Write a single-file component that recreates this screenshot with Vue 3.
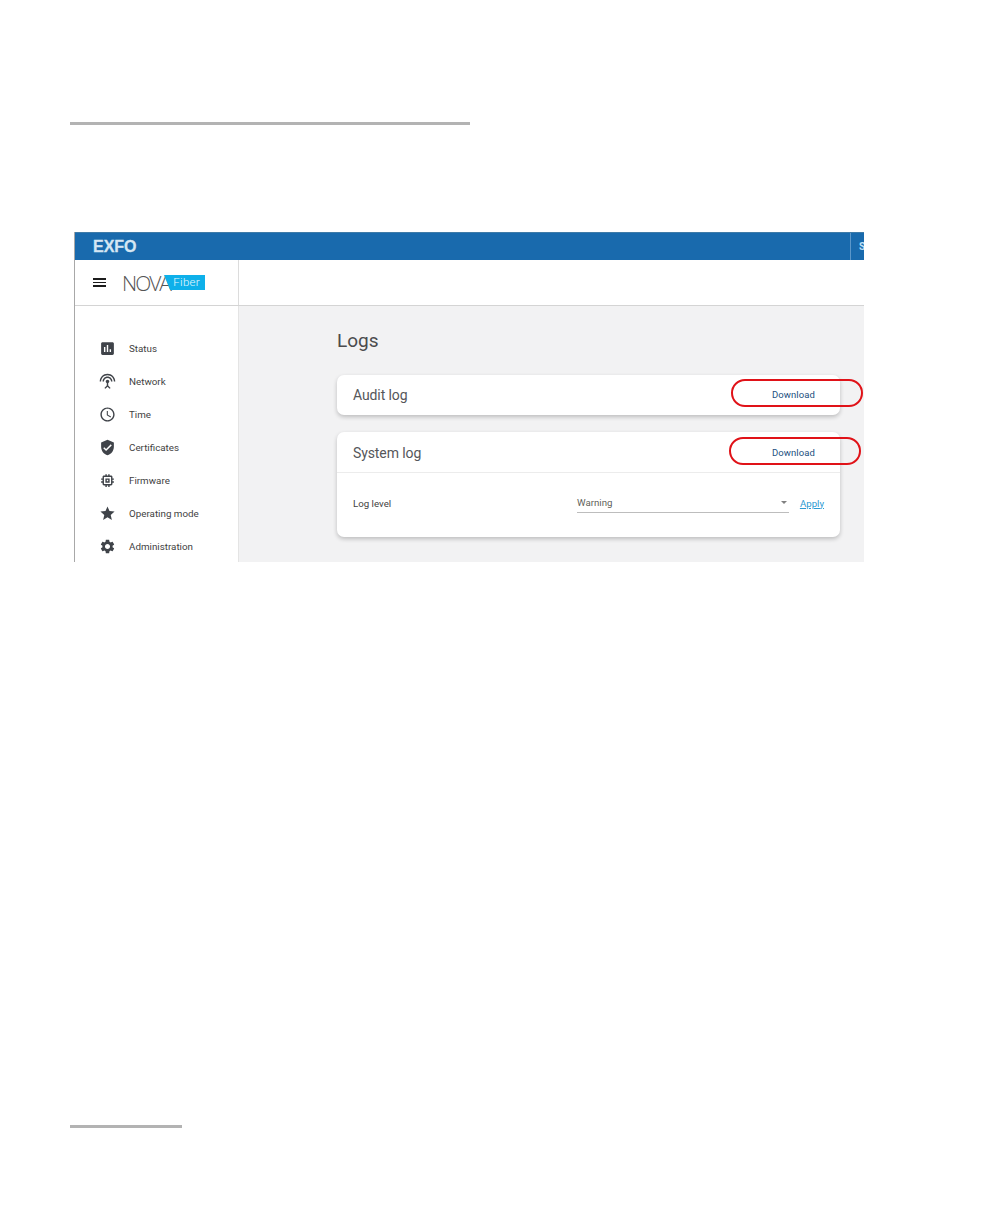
<script setup>
const nav = [
  { label: 'Status', d: 'M19 3H5c-1.1 0-2 .9-2 2v14c0 1.1.9 2 2 2h14c1.1 0 2-.9 2-2V5c0-1.1-.9-2-2-2zM9 17H7v-7h2v7zm4 0h-2V7h2v10zm4 0h-2v-4h2v4z' },
  { label: 'Network', d: 'M12 5c-3.87 0-7 3.13-7 7h2c0-2.76 2.24-5 5-5s5 2.24 5 5h2c0-3.87-3.13-7-7-7zm1 9.29c.88-.39 1.5-1.26 1.5-2.29 0-1.38-1.12-2.5-2.5-2.5S9.5 10.62 9.5 12c0 1.02.62 1.9 1.5 2.29v3.3L7.59 21 9 22.41l3-3 3 3L16.41 21 13 17.59v-3.3zM12 1C5.93 1 1 5.93 1 12h2c0-4.97 4.03-9 9-9s9 4.03 9 9h2c0-6.07-4.93-11-11-11z' },
  { label: 'Time', d: 'M11.99 2C6.47 2 2 6.48 2 12s4.47 10 9.99 10C17.52 22 22 17.52 22 12S17.52 2 11.99 2zM12 20c-4.42 0-8-3.58-8-8s3.58-8 8-8 8 3.58 8 8-3.58 8-8 8zm.5-13H11v6l5.25 3.15.75-1.23-4.5-2.67z' },
  { label: 'Certificates', d: 'M12 1L3 5v6c0 5.55 3.84 10.74 9 12 5.16-1.26 9-6.45 9-12V5l-9-4zm-2 16l-4-4 1.41-1.41L10 14.17l6.59-6.59L18 9l-8 8z' },
  { label: 'Firmware', d: 'M15 9H9v6h6V9zm-2 4h-2v-2h2v2zm8-2V9h-2V7c0-1.1-.9-2-2-2h-2V3h-2v2h-2V3H9v2H7c-1.1 0-2 .9-2 2v2H3v2h2v2H3v2h2v2c0 1.1.9 2 2 2h2v2h2v-2h2v2h2v-2h2c1.1 0 2-.9 2-2v-2h2v-2h-2v-2h2zm-4 6H7V7h10v10z' },
  { label: 'Operating mode', d: 'M12 17.27L18.18 21l-1.64-7.03L22 9.24l-7.19-.61L12 2 9.19 8.63 2 9.24l5.46 4.73L5.82 21z' },
  { label: 'Administration', d: 'M19.14 12.94c.04-.3.06-.61.06-.94 0-.32-.02-.64-.07-.94l2.03-1.58c.18-.14.23-.41.12-.61l-1.92-3.32c-.12-.22-.37-.29-.59-.22l-2.39.96c-.5-.38-1.03-.7-1.62-.94l-.36-2.54c-.04-.24-.24-.41-.48-.41h-3.84c-.24 0-.43.17-.47.41l-.36 2.54c-.59.24-1.13.57-1.62.94l-2.39-.96c-.22-.08-.47 0-.59.22L2.74 8.87c-.12.21-.08.47.12.61l2.03 1.58c-.05.3-.09.63-.09.94s.02.64.07.94l-2.03 1.58c-.18.14-.23.41-.12.61l1.92 3.32c.12.22.37.29.59.22l2.39-.96c.5.38 1.03.7 1.62.94l.36 2.54c.05.24.24.41.48.41h3.84c.24 0 .44-.17.47-.41l.36-2.54c.59-.24 1.13-.56 1.62-.94l2.39.96c.22.08.47 0 .59-.22l1.92-3.32c.12-.22.07-.47-.12-.61l-2.01-1.58zM12 15.6c-1.98 0-3.6-1.62-3.6-3.6s1.62-3.6 3.6-3.6 3.6 1.62 3.6 3.6-1.62 3.6-3.6 3.6z' }
]
</script>

<template>
  <div class="page">
    <div class="rule rule-top"></div>
    <div class="shot">
      <div class="topbar">
        <span class="exfo">EXFO</span>
        <div class="user"><span>S</span></div>
      </div>
      <div class="head">
        <div class="brand">
          <div class="burger"><i></i><i></i><i></i></div>
          <span class="nova">NOVA</span>
          <span class="fiber">Fiber</span>
        </div>
      </div>
      <div class="main">
        <nav class="side">
          <div v-for="n in nav" :key="n.label" class="item">
            <svg viewBox="0 0 24 24" class="ico"><path :d="n.d" /></svg>
            <span>{{ n.label }}</span>
          </div>
        </nav>
        <div class="content">
          <h1>Logs</h1>
          <section class="card audit">
            <div class="card-head">
              <h2>Audit log</h2>
              <a class="dl">Download</a>
            </div>
          </section>
          <section class="card">
            <div class="card-head divided">
              <h2>System log</h2>
              <a class="dl">Download</a>
            </div>
            <div class="row">
              <span class="lvl">Log level</span>
              <div class="select">
                <span>Warning</span>
                <i class="caret"></i>
              </div>
              <a class="apply">Apply</a>
            </div>
          </section>
        </div>
      </div>
      <div class="ring ring-a"></div>
      <div class="ring ring-b"></div>
    </div>
    <div class="rule rule-bottom"></div>
  </div>
</template>

<style scoped>
.page {
  width: 1008px;
  height: 1224px;
  padding-top: 122px;
  box-sizing: border-box;
  background: #fff;
  font-family: Roboto, "Liberation Sans", sans-serif;
  overflow: hidden;
}
.rule { height: 3px; background: #b3b3b3; margin-left: 70px; }
.rule-top { width: 400px; }
.rule-bottom { width: 112px; margin-top: 563px; }
.shot {
  position: relative;
  width: 790px;
  height: 330px;
  margin: 107px 0 0 74px;
  box-sizing: border-box;
  border-left: 1px solid #a8a8a8;
  overflow: hidden;
  background: #fff;
}
.topbar {
  height: 28px;
  background: #196aad;
  border-top: 1px solid #3f7ba8;
  box-sizing: border-box;
  display: flex;
  align-items: center;
  justify-content: space-between;
  padding-left: 18px;
}
.exfo {
  font-family: "Liberation Sans", sans-serif;
  font-weight: 700;
  font-size: 16px;
  color: #d5e6f3;
  -webkit-text-stroke: .3px #d5e6f3;
}
.user {
  width: 5px;
  height: 27px;
  border-left: 1px solid #5c97c9;
  padding-left: 8px;
  font-size: 10px;
  font-weight: 700;
  line-height: 27px;
  color: #bfe0f7;
  overflow: hidden;
}
.head {
  height: 46px;
  box-sizing: border-box;
  border-bottom: 1px solid #d4d4d4;
}
.brand {
  width: 164px;
  height: 45px;
  box-sizing: border-box;
  border-right: 1px solid #dcdcdc;
  display: flex;
  align-items: center;
  padding-left: 18px;
}
.burger { width: 13px; display: flex; flex-direction: column; gap: 2px; margin-right: 16px; }
.burger i { display: block; height: 1.5px; background: #1c1c1c; }
.nova {
  font-family: "Open Sans", sans-serif;
  font-weight: 300;
  font-size: 21px;
  letter-spacing: -2px;
  color: #555;
  width: 42px;
  flex: none;
}
.fiber {
  width: 41px;
  height: 15px;
  background: #0eb0ea;
  clip-path: polygon(0 0, 100% 0, 100% 100%, 15% 100%);
  color: #e8f8fe;
  font-size: 11.5px;
  font-weight: 300;
  line-height: 15px;
  letter-spacing: .3px;
  text-align: right;
  padding-right: 5px;
  box-sizing: border-box;
}
.main { display: flex; height: 256px; }
.side {
  width: 164px;
  flex: none;
  box-sizing: border-box;
  border-right: 1px solid #e4e4e4;
  padding-top: 26px;
  background: #fff;
}
.item {
  height: 33px;
  display: flex;
  align-items: center;
  padding-left: 24px;
  font-size: 9.8px;
  font-weight: 400;
  color: #3f3f3f;
}
.ico { width: 17px; height: 17px; fill: #3f4349; margin-right: 13px; flex: none; }
.content {
  flex: 1;
  background: #f2f2f3;
  padding: 24px 24px 0 98px;
}
h1 {
  margin: 0;
  font-size: 19px;
  line-height: 22px;
  font-weight: 400;
  color: #4b4b4d;
}
.card {
  width: 503px;
  background: #fff;
  border-radius: 7px;
  box-shadow: 0 2px 4px rgba(0, 0, 0, .22);
  margin-top: 17px;
}
.audit { margin-top: 23px; }
.card-head {
  height: 40px;
  box-sizing: border-box;
  display: flex;
  align-items: center;
  justify-content: space-between;
  padding: 0 25px 0 16px;
}
.divided { border-bottom: 1px solid #ececec; height: 41px; padding-top: 2px; }
h2 {
  margin: 0;
  font-size: 14px;
  font-weight: 400;
  letter-spacing: -0.1px;
  color: #55565a;
}
.dl { font-size: 9.5px; color: #234f80; letter-spacing: .1px; margin-top: -2px; }
.row {
  height: 64px;
  box-sizing: border-box;
  display: flex;
  align-items: center;
  padding: 0 16px 4px;
  font-size: 9.7px;
}
.lvl { width: 224px; color: #3f3f3f; }
.select {
  width: 212px;
  height: 19px;
  box-sizing: border-box;
  border-bottom: 1px solid #bdbdbd;
  display: flex;
  align-items: center;
  justify-content: space-between;
  color: #5f5f5a;
  margin-right: 11px;
  padding-right: 2px;
}
.caret {
  width: 0;
  height: 0;
  border-left: 3.5px solid transparent;
  border-right: 3.5px solid transparent;
  border-top: 3.5px solid #808080;
}
.apply { color: #2c9ad2; text-decoration: underline; }
.ring {
  position: absolute;
  box-sizing: border-box;
  width: 132px;
  height: 28px;
  border: 2px solid #e01218;
  border-radius: 14px;
}
.ring-a { left: 656px; top: 147px; }
.ring-b { left: 654px; top: 205px; }
</style>
